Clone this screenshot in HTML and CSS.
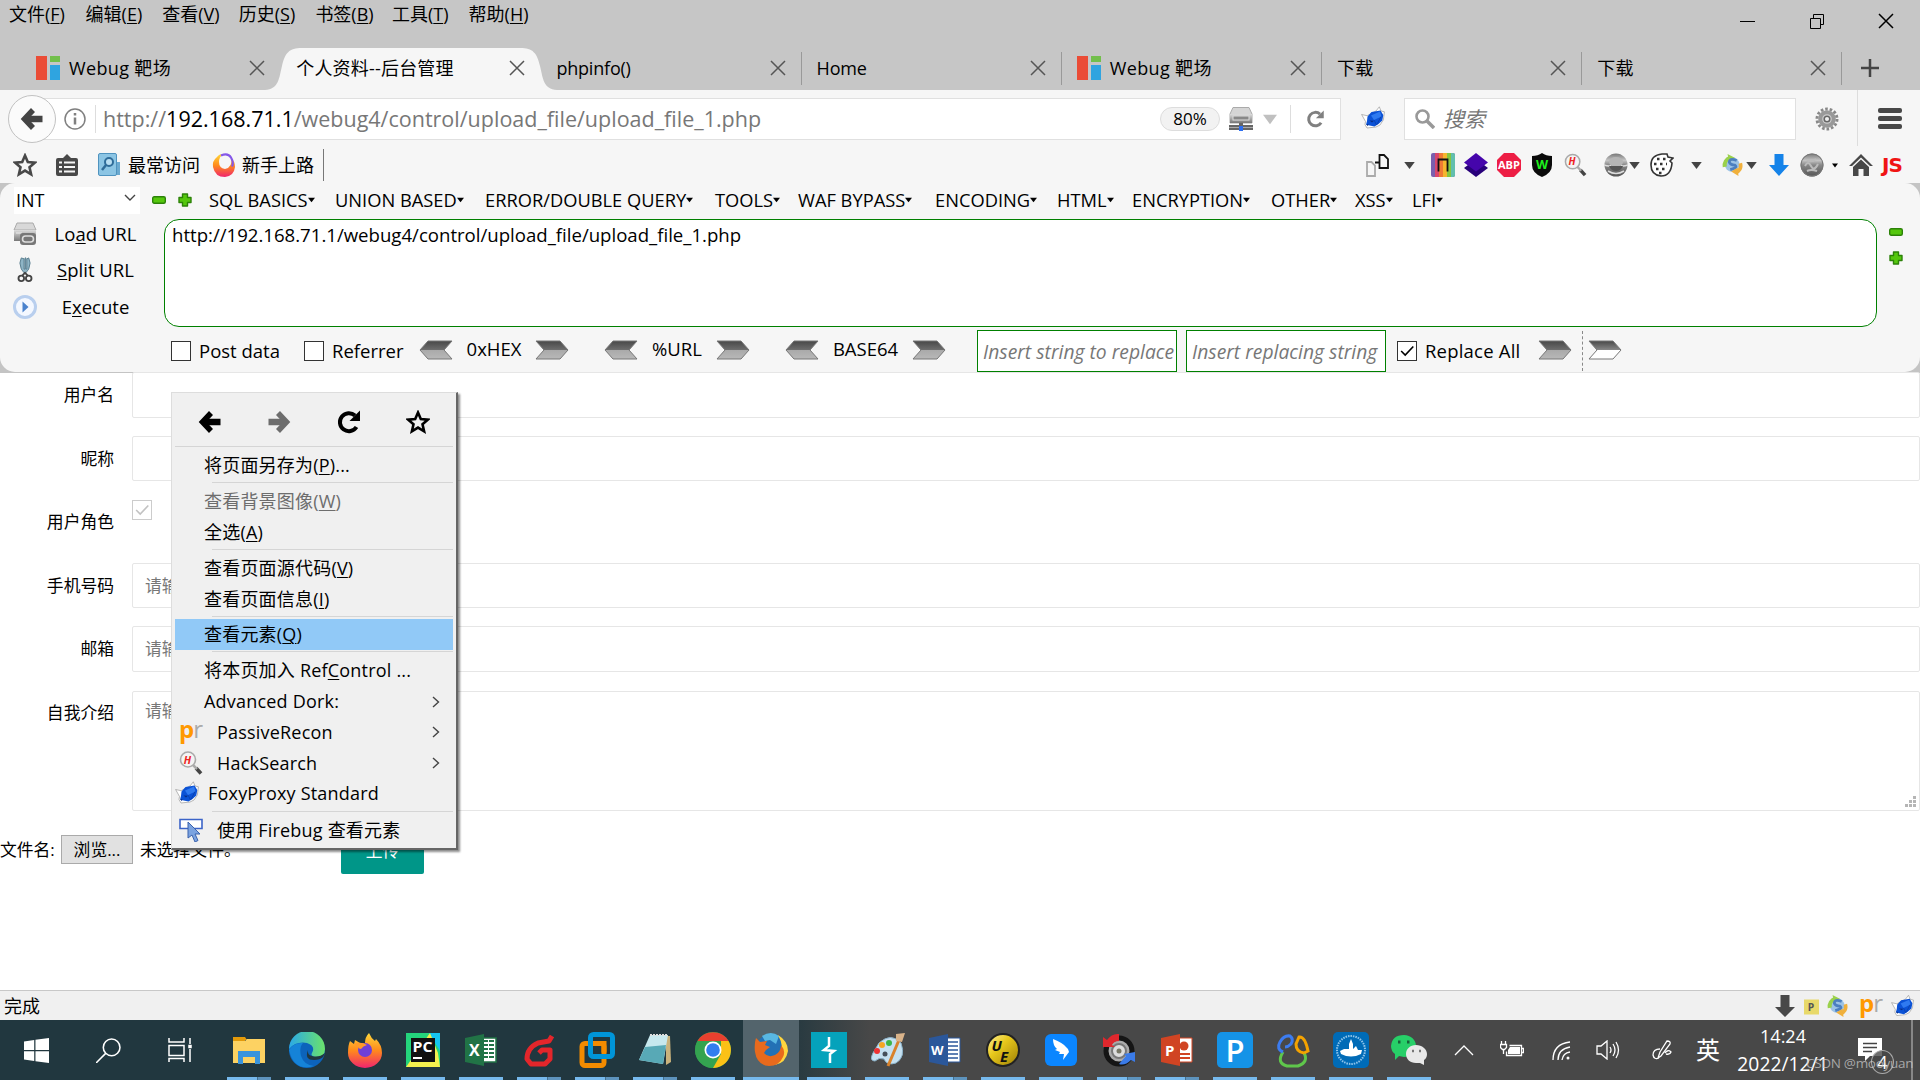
FILE: index.html
```html
<!DOCTYPE html>
<html lang="zh-CN">
<head>
  <meta charset="UTF-8">
  <title>个人资料--后台管理</title>
  <link rel="stylesheet" href="styles.css">
</head>
<body>

  <!-- shared icons -->
  <svg class="defs">
    <defs>
      <linearGradient id="steel" x1="0" y1="0" x2="0" y2="1"><stop offset="0" stop-color="#484848"/><stop offset=".5" stop-color="#6e6e6e"/><stop offset=".52" stop-color="#aaa"/><stop offset="1" stop-color="#b8b8b8"/></linearGradient>
      <linearGradient id="steel2" x1="0" y1="0" x2="0" y2="1"><stop offset="0" stop-color="#484848"/><stop offset=".5" stop-color="#888"/><stop offset=".52" stop-color="#fff"/><stop offset="1" stop-color="#fff"/></linearGradient>
      <linearGradient id="metal" x1="0" y1="0" x2="0" y2="1"><stop offset="0" stop-color="#ddd"/><stop offset="1" stop-color="#777"/></linearGradient>
      <linearGradient id="dark" x1="0" y1="0" x2="0" y2="1"><stop offset="0" stop-color="#777"/><stop offset=".3" stop-color="#c4c4c4"/><stop offset=".5" stop-color="#888"/><stop offset="1" stop-color="#555"/></linearGradient>
      <linearGradient id="fire" x1="0" y1="0" x2="0" y2="1"><stop offset="0" stop-color="#ffd83a"/><stop offset=".5" stop-color="#ff8a1c"/><stop offset="1" stop-color="#f0246e"/></linearGradient>
      <linearGradient id="edge" x1="0" y1="0" x2="1" y2="0"><stop offset="0" stop-color="#2aa8e8"/><stop offset="1" stop-color="#6be36a"/></linearGradient>
      <linearGradient id="gold" x1="0" y1="0" x2="1" y2="1"><stop offset="0" stop-color="#fff2a0"/><stop offset=".4" stop-color="#e8c81c"/><stop offset="1" stop-color="#9a7d05"/></linearGradient>
    </defs>
    <symbol id="x" viewBox="0 0 16 16"><path d="M1 1L15 15M15 1L1 15" fill="none" stroke="currentColor" stroke-width="1.5"/></symbol>
    <symbol id="webug" viewBox="0 0 24 24"><path fill="#ea4c36" d="M0 0h11v24H0z"/><path fill="#72bf4b" d="M14 0h10v6H14z"/><path fill="#2fa4e0" d="M14 9h10v15H14z"/></symbol>
    <symbol id="back" viewBox="0 0 24 24"><path fill="none" stroke="currentColor" stroke-width="5.500" d="M13 3L4.500 12L13 21"/><path stroke="currentColor" stroke-width="6.500" d="M5 12H22.500"/></symbol>
    <symbol id="reload" viewBox="0 0 24 24"><path fill="none" stroke="currentColor" stroke-width="4" d="M19.500 17A9 9 0 1 1 18 5.500"/><path fill="currentColor" d="M23 .500V11H12.500z"/></symbol>
    <symbol id="star" viewBox="0 0 24 24"><path fill="none" stroke="currentColor" stroke-width="2.600" d="M12 2.600l2.800 6.500 7 .600-5.300 4.600 1.600 7-6.100-3.700-6.100 3.700 1.600-7L2.200 9.700l7-.600z"/></symbol>
    <symbol id="down" viewBox="0 0 12 8"><path fill="currentColor" d="M0 0h12L6 8z"/></symbol>
    <symbol id="fox" viewBox="0 0 24 24"><path fill="#fff" stroke="#999" stroke-width=".7" d="M.6 8.500l5.500 1.200L15 5l3.300-4.200L20 5l3.400.800-1 8-3.400 5.200-4 2-9 1-2-3.500.500-3z"/><path fill="#0b52d6" d="M6.500 10.500l4-4.500 9-1.500 2.800 4.500-1 5.500-3.800 3.500-4 2.500-8.500-1.800L6 15z"/><path fill="#2f7af0" d="M10 9.500l9-4 1.500 5-7.500 3.500z"/><path fill="#0a2f86" d="M8.500 14.500l4.500.3-2 1.700zM5.500 18l2 .3-1 2z"/><path fill="none" stroke="#0a3da6" stroke-width=".8" d="M13 14l2.500 5M20 10.500l-4 8"/></symbol>
    <symbol id="hmag" viewBox="0 0 24 24"><path stroke="#444" stroke-width="3.600" d="M17 17l5 5.500"/><path stroke="#aaa" stroke-width="2.500" d="M13 13l5 5"/><circle cx="9" cy="8.500" r="7.500" fill="#f4f4f4" stroke="#aaa" stroke-width="1.600"/><text class="glyph" x="4.800" y="12.500" font-size="10.500" font-style="italic" fill="#e22">H</text></symbol>
    <symbol id="swirl" viewBox="0 0 24 24"><circle cx="11" cy="11.500" r="8" fill="#9cc3e6"/><path fill="none" stroke="#9ad14b" stroke-width="4.500" d="M3 14A9 9 0 0 1 9 4"/><path fill="#9ad14b" d="M6 0l8 4-6 5z"/><path fill="none" stroke="#4c7fc0" stroke-width="3" d="M16 7q-8-3-8 2 1 3 6 3 4 3-5 5"/><path fill="none" stroke="#f0b03c" stroke-width="4" d="M20 10A9 9 0 0 1 16 20"/><path fill="#f0b03c" d="M10 19l7-4 1 9z"/></symbol>
    <symbol id="minus" viewBox="0 0 14 8"><rect x=".7" y=".7" width="12.600" height="6.600" rx="1.500" fill="#55c70d" stroke="#2c8208" stroke-width="1.400"/></symbol>
    <symbol id="plus" viewBox="0 0 14 14"><path fill="#55c70d" stroke="#2c8208" stroke-width="1.400" stroke-linejoin="round" d="M4.500 1h5v3.500H13v5H9.500V13h-5V9.500H1v-5h3.500z"/></symbol>
    <symbol id="arrR" viewBox="0 0 34 20"><path fill="url(#steel)" stroke="#777" d="M1 1h24l8 9-8 9H1l8-9z"/></symbol>
    <symbol id="arrL" viewBox="0 0 34 20"><path fill="url(#steel)" stroke="#777" d="M33 1H9l-8 9 8 9h24l-8-9z"/></symbol>
    <symbol id="check" viewBox="0 0 20 20"><path fill="none" stroke="currentColor" stroke-width="1.800" d="M3.500 10l4.500 4.500L17 5"/></symbol>
    <symbol id="chev" viewBox="0 0 8 12"><path fill="none" stroke="#444" stroke-width="1.400" d="M1 1l5.500 5L1 11"/></symbol>
    <symbol id="printer" viewBox="0 0 24 24"><path fill="#d5d5d5" stroke="#aaa" d="M4 .5h16L23 7v9H1V7z"/><path fill="url(#metal)" d="M1 7h22v9H1z"/><rect x="4" y="9" width="16" height="4" fill="#888" stroke="#ddd"/><path fill="#666" d="M10 16h4v3H10zM0 18h24v5H0z"/><path stroke="#aaa" d="M0 20.500h24"/><path fill="#2d6ff0" d="M10 19h4v5h-4z"/></symbol>
  </svg>

  <div class="titlebar">
    <div class="menubar">
      <span>文件(<u>F</u>)</span><span>编辑(<u>E</u>)</span><span>查看(<u>V</u>)</span><span>历史(<u>S</u>)</span><span>书签(<u>B</u>)</span><span>工具(<u>T</u>)</span><span>帮助(<u>H</u>)</span>
    </div>
    <div class="winbtns">
      <svg width="16" height="16"><path d="M0 8.500h15" stroke="#000"/></svg>
      <svg width="16" height="16" fill="none" stroke="#000"><path d="M1.500 5.500h10v10h-10zM4.500 5V1.500h10v10H12"/></svg>
      <svg width="16" height="16"><use href="#x"/></svg>
    </div>
  </div>

  <div class="tabs">
    <div class="tab"><svg class="fav"><use href="#webug"/></svg><span>Webug 靶场</span><svg class="close"><use href="#x"/></svg></div>
    <div class="tab active">
      <svg class="tabshape" viewBox="0 0 292 42"><path fill="#f6f6f6" d="M0 42C14 41 14 30 17 18C20 5 24 0 37 0H255C268 0 272 5 275 18C278 30 278 41 292 42z"/></svg>
      <span>个人资料--后台管理</span><svg class="close"><use href="#x"/></svg>
    </div>
    <div class="tab line"><span class="latin">phpinfo()</span><svg class="close"><use href="#x"/></svg></div>
    <div class="tab line"><span class="latin">Home</span><svg class="close"><use href="#x"/></svg></div>
    <div class="tab line"><svg class="fav"><use href="#webug"/></svg><span>Webug 靶场</span><svg class="close"><use href="#x"/></svg></div>
    <div class="tab line"><span>下载</span><svg class="close"><use href="#x"/></svg></div>
    <div class="tab line"><span>下载</span><svg class="close"><use href="#x"/></svg></div>
    <svg class="newtab" viewBox="0 0 18 18"><path d="M9 0v18M0 9h18" stroke="#444" stroke-width="2.500"/></svg>
  </div>

  <div class="navbar">
    <div class="backbtn"><svg><use href="#back"/></svg></div>
    <div class="urlbar">
      <svg class="info" viewBox="0 0 22 22"><circle cx="11" cy="11" r="10" fill="none" stroke="#808080" stroke-width="1.500"/><path stroke="#808080" stroke-width="2.500" d="M11 9.500v7M11 5v2.500"/></svg>
      <div class="url">http://<b>192.168.71.1</b>/webug4/control/upload_file/upload_file_1.php</div>
      <span class="zoom">80%</span>
      <svg class="printer"><use href="#printer"/></svg>
      <svg class="drop"><use href="#down"/></svg>
      <div class="reload"><svg><use href="#reload"/></svg></div>
    </div>
    <svg class="foxbtn"><use href="#fox"/></svg>
    <div class="search">
      <svg viewBox="0 0 20 20"><circle cx="7.500" cy="7.500" r="6" fill="none" stroke="#999" stroke-width="2.600"/><path stroke="#999" stroke-width="3.500" d="M12 12l7 7"/></svg>
      <i>搜索</i>
    </div>
    <svg class="gear" viewBox="0 0 24 24"><circle cx="12" cy="12" r="10" fill="none" stroke="#888" stroke-width="3" stroke-dasharray="2.600 1.900"/><circle cx="12" cy="12" r="6.800" fill="#ccc" stroke="#999" stroke-width="4"/><circle cx="12" cy="12" r="2.800" fill="#eee" stroke="#666" stroke-width="1.500"/></svg>
    <div class="burger"><i></i><i></i><i></i></div>
  </div>

  <div class="bookmarks">
    <svg class="bm-star"><use href="#star"/></svg>
    <svg class="bm-list" viewBox="0 0 22 22"><path fill="#484848" d="M11 0l4 4h5q2 0 2 2v14q0 2-2 2H2q-2 0-2-2V6q0-2 2-2h5z"/><path stroke="#f6f6f6" stroke-width="2.200" d="M3 8.500h3M8 8.500h11M3 13h3M8 13h11M3 17.500h3M8 17.500h11"/></svg>
    <svg class="bm-book" viewBox="0 0 22 24"><path fill="#6ba9cf" d="M17 9h5v13h-5z"/><rect x=".5" y=".5" width="18" height="22" rx="1.500" fill="#8cc5e4" stroke="#4f93bf"/><circle cx="11" cy="9" r="4" fill="#b9def2" stroke="#2f6c99" stroke-width="2"/><path stroke="#2f6c99" stroke-width="2.500" d="M8 12l-4 5"/></svg>
    <span class="bm-t1">最常访问</span>
    <svg class="bm-ff" viewBox="0 0 24 24"><path fill="url(#fire)" d="M5 4Q0 8 1 14q2 10 12 10 9-1 10-10 0-6-4-9 2 9-6 11-6-1-6-7 0-5 4-8-4 0-6 3z"/><path fill="none" stroke="#8557e8" stroke-width="2.200" d="M9 2.500q7-3 10 2t1 9"/></svg>
    <span class="bm-t2">新手上路</span>
    <div class="addons">
      <svg class="a-pages" viewBox="0 0 24 24" fill="none" stroke-width="1.800"><path stroke="#aaa" d="M2 9h4.500L10 12.500V23H2z"/><path stroke="#111" d="M14.500 2h4.500l4 4v9h-8.500zM10 9.500h4.500"/></svg>
      <svg class="a-dd a1"><use href="#down"/></svg>
      <svg class="a-tool" viewBox="0 0 24 24"><rect width="24" height="24" rx="2" fill="#7b5fae"/><path fill="#d9466c" d="M4 0h4v24H4z"/><path fill="#ee7a35" d="M8 0h4v24H8z"/><path fill="#f5b52e" d="M12 0h4v24h-4z"/><path fill="#86c540" d="M16 0h4v24h-4z"/><path fill="#62bfae" d="M20 0h2q2 0 2 2v20q0 2-2 2h-2z"/><path fill="none" stroke="#111" stroke-width="1.800" d="M7.500 18.500V6.500h9v12"/></svg>
      <svg class="a-stack" viewBox="0 0 24 24"><path fill="#28007a" d="M0 15l4-3h16l4 3-12 9z"/><path fill="#4505ab" d="M0 9.500L12 0l12 9.500-12 9z"/></svg>
      <svg class="a-abp" viewBox="0 0 24 24"><path fill="#ed1e45" d="M7 0h10l7 7v10l-7 7H7l-7-7V7z"/><text class="glyph" x="1" y="16" font-size="10.500" textLength="22" lengthAdjust="spacingAndGlyphs" fill="#fff">ABP</text></svg>
      <svg class="a-w" viewBox="0 0 20 24"><path fill="#0b0b0b" d="M10 0q4 3 10 3v9q0 8-10 12Q0 20 0 12V3q6 0 10-3z"/><text class="glyph" x="10" y="15.500" text-anchor="middle" font-size="12.500" fill="#1df01d">W</text></svg>
      <svg class="a-hm"><use href="#hmag"/></svg>
      <svg class="a-globe" viewBox="0 0 24 24"><circle cx="12" cy="12" r="11.500" fill="url(#dark)"/><path fill="none" stroke="#ddd" stroke-width="1.500" d="M0 12q6 2 7 0M24 12q-6 2-7 0M4 18q8 5 16 0"/><ellipse cx="12" cy="9" rx="7" ry="5" fill="#b5b5b5"/><path fill="#555" d="M5 13h14q-2 5-7 5t-7-5z"/></svg>
      <svg class="a-dd a2"><use href="#down"/></svg>
      <svg class="a-cookie" viewBox="0 0 24 24"><path fill="#fff" stroke="#333" stroke-width="1.600" d="M22 10q-1 13-11 13Q1 22 1 12 1 2 12 1h5l1 3 5 1-3 3z"/><path stroke="#333" stroke-width="2.400" stroke-dasharray="2.500 3.500" d="M7 6h10M4 11h13M6 16h12M9 20h6"/></svg>
      <svg class="a-dd a3"><use href="#down"/></svg>
      <svg class="a-swirl"><use href="#swirl"/></svg>
      <svg class="a-dd a4"><use href="#down"/></svg>
      <svg class="a-down" viewBox="0 0 20 22"><path fill="#1583e9" d="M5.500 0h9v11H20l-10 11L0 11h5.500z"/></svg>
      <svg class="a-ball" viewBox="0 0 24 24"><circle cx="12" cy="12" r="11.500" fill="url(#dark)"/><circle cx="12" cy="12" r="11" fill="none" stroke="#777"/><path fill="none" stroke="#bbb" stroke-width="2" d="M5 13q3-6 6 0t7-2M7 7q4 3 9-1M7 18q4-2 10 0"/></svg>
      <svg class="a-dd small a5"><use href="#down"/></svg>
      <svg class="a-home" viewBox="0 0 24 22"><path fill="#484848" d="M12 0l12 12H20v10h-5.500v-7h-5v7H4V12H0z"/><path fill="none" stroke="#f6f6f6" stroke-width="1.500" d="M3 13l9-8.500 9 8.500"/></svg>
      <span class="a-js">JS</span>
    </div>
  </div>

  <div class="hackwrap">
    <div class="hackbar">
      <div class="hb-menu">
        <div class="hb-select"><span>INT</span><svg viewBox="0 0 12 8"><path fill="none" stroke="#444" stroke-width="1.400" d="M1 1l5 5 5-5"/></svg></div>
        <svg class="minus"><use href="#minus"/></svg>
        <svg class="plus"><use href="#plus"/></svg>
        <div class="hb-items">
          <span class="w1">SQL BASICS<svg><use href="#down"/></svg></span>
          <span class="w2">UNION BASED<svg><use href="#down"/></svg></span>
          <span class="w3">ERROR/DOUBLE QUERY<svg><use href="#down"/></svg></span>
          <span class="w4">TOOLS<svg><use href="#down"/></svg></span>
          <span class="w5">WAF BYPASS<svg><use href="#down"/></svg></span>
          <span class="w6">ENCODING<svg><use href="#down"/></svg></span>
          <span class="w7">HTML<svg><use href="#down"/></svg></span>
          <span class="w8">ENCRYPTION<svg><use href="#down"/></svg></span>
          <span class="w9">OTHER<svg><use href="#down"/></svg></span>
          <span class="w10">XSS<svg><use href="#down"/></svg></span>
          <span>LFI<svg><use href="#down"/></svg></span>
        </div>
      </div>
      <div class="hb-main">
        <div class="hb-side">
          <div><svg viewBox="0 0 24 24"><path fill="#d8d8d8" stroke="#aaa" d="M4 1h16l3 7H1z"/><path fill="url(#metal)" d="M1 8h22v11H1z"/><path stroke="#eee" d="M3 11h6"/><rect x="7" y="11" width="16" height="12" rx="3" fill="#777"/><path fill="none" stroke="#ddd" stroke-width="1.600" d="M9.500 17q0-3 3-3h5q3 0 3 3t-3 3h-5q-3 0-3-3z"/></svg><span>Lo<u>a</u>d URL</span></div>
          <div><svg viewBox="0 0 24 28"><path fill="#8fb5c6" stroke="#557b8c" d="M8 1q-3 5 0 12l3 4 2 0 3-4q3-7 0-12l-2 1v11h-1V1h-1v12h-1V2z"/><circle cx="8" cy="23" r="3" fill="none" stroke="#444" stroke-width="2"/><circle cx="16" cy="23" r="3" fill="none" stroke="#444" stroke-width="2"/><path stroke="#444" stroke-width="2" fill="none" d="M9 20l3-3 3 3"/></svg><span><u>S</u>plit URL</span></div>
          <div><svg viewBox="0 0 24 24"><circle cx="12" cy="12" r="10.500" fill="#f4f8ff" stroke="#b9cfee" stroke-width="3"/><path fill="#4a82cd" d="M9.500 6.500l6 5.500-6 5.500z"/></svg><span>E<u>x</u>ecute</span></div>
        </div>
        <div class="hb-text">http://192.168.71.1/webug4/control/upload_file/upload_file_1.php</div>
        <div class="hb-size"><svg class="minus"><use href="#minus"/></svg><svg class="plus"><use href="#plus"/></svg></div>
      </div>
      <div class="hb-tools">
        <i class="box"></i><span class="t-post">Post data</span>
        <i class="box"></i><span class="t-ref">Referrer</span>
        <svg class="arr"><use href="#arrL"/></svg><span class="t-hex">0xHEX</span><svg class="arr gap"><use href="#arrR"/></svg>
        <svg class="arr"><use href="#arrL"/></svg><span class="t-url">%URL</span><svg class="arr gap"><use href="#arrR"/></svg>
        <svg class="arr"><use href="#arrL"/></svg><span class="t-b64">BASE64</span><svg class="arr"><use href="#arrR"/></svg>
        <div class="rep first">Insert string to replace</div>
        <div class="rep">Insert replacing string</div>
        <i class="box"><svg><use href="#check"/></svg></i><span class="t-all">Replace All</span>
        <svg class="arr"><use href="#arrR"/></svg>
        <i class="dash"></i>
        <svg class="arr" viewBox="0 0 34 20"><path fill="url(#steel2)" stroke="#777" d="M1 1h24l8 9-8 9H1l8-9z"/></svg>
      </div>
    </div>
  </div>

  <div class="page">
    <div class="row"><label>用户名</label><div class="field"></div></div>
    <div class="row"><label>昵称</label><div class="field"></div></div>
    <div class="row"><label>用户角色</label><i class="rolebox"><svg><use href="#check"/></svg></i></div>
    <div class="row"><label>手机号码</label><div class="field">请输入</div></div>
    <div class="row"><label>邮箱</label><div class="field">请输入</div></div>
    <div class="row"><label>自我介绍</label><div class="field area">请输入<svg viewBox="0 0 12 12"><path fill="#b5b5b5" d="M8 0h3v3H8zM4 4h3v3H4zM8 4h3v3H8zM0 8h3v3H0zM4 8h3v3H4zM8 8h3v3H8z"/></svg></div></div>
    <div class="filerow"><span>文件名:</span><span class="browse">浏览...</span><span class="nofile">未选择文件。</span><span class="upload">上传</span></div>

    <div class="ctx">
      <div class="ctx-nav">
        <svg><use href="#back"/></svg>
        <svg class="fwd"><use href="#back"/></svg>
        <svg><use href="#reload"/></svg>
        <svg><use href="#star"/></svg>
      </div>
      <div class="item">将页面另存为(<u>P</u>)...</div>
      <hr>
      <div class="item off">查看背景图像(<u>W</u>)</div>
      <div class="item">全选(<u>A</u>)</div>
      <hr>
      <div class="item">查看页面源代码(<u>V</u>)</div>
      <div class="item">查看页面信息(<u>I</u>)</div>
      <hr>
      <div class="item hot">查看元素(<u>Q</u>)</div>
      <hr>
      <div class="item">将本页加入 Ref<u>C</u>ontrol ...</div>
      <div class="item">Advanced Dork:<svg class="chev"><use href="#chev"/></svg></div>
      <div class="item icon"><span class="pr"><b>p</b>r</span>PassiveRecon<svg class="chev"><use href="#chev"/></svg></div>
      <div class="item icon"><svg class="ic"><use href="#hmag"/></svg>HackSearch<svg class="chev"><use href="#chev"/></svg></div>
      <div class="item foxy"><svg class="ic"><use href="#fox"/></svg>FoxyProxy Standard</div>
      <hr>
      <div class="item icon"><svg class="ic" viewBox="0 0 24 24"><path fill="#fff" stroke="#3c64c8" stroke-width="1.600" d="M1 1.500h22v9H1z"/><path fill="#7ba3e0" stroke="#3b62ad" d="M9 4v16l4-3 3 7 3-1.500-3-6.500h5z"/></svg>使用 Firebug 查看元素</div>
    </div>
  </div>

  <div class="status">
    <span>完成</span>
    <svg class="s-down" viewBox="0 0 20 22"><path fill="#484848" d="M5.500 0h9v12H20l-10 10L0 12h5.500z"/></svg>
    <svg class="s-p" viewBox="0 0 16 16"><path fill="#e8d96a" d="M0 0h16v16H0z"/><text class="glyph" x="4" y="12" font-size="11" fill="#555">P</text></svg>
    <svg class="s-sw"><use href="#swirl"/></svg>
    <span class="pr"><b>p</b>r</span>
    <svg class="s-fox"><use href="#fox"/></svg>
  </div>

  <div class="taskbar">
    <div class="sys"><svg width="25" height="25" viewBox="0 0 24 24"><path fill="#fff" d="M0 3.300l9.800-1.400v9.500H0zM11 1.700L24 0v11.400H11zM0 12.600h9.800v9.500L0 20.700zM11 12.600h13V24l-13-1.700z"/></svg></div>
    <div class="sys"><svg width="25" height="25" viewBox="0 0 24 24" fill="none" stroke="#fff" stroke-width="1.500"><circle cx="15" cy="9" r="8"/><path d="M9.500 14.500L0 24"/></svg></div>
    <div class="sys"><svg width="24" height="24" viewBox="0 0 24 24" fill="none" stroke="#fff" stroke-width="1.500"><path d="M1 0v4h15V0M1 7.500h15v10H1zM1 24v-3.500h15V24M22 0v6M22 11v13"/><path fill="#fff" d="M21 7.500h2v2h-2z"/></svg></div>
    <div class="app multi"><svg viewBox="0 0 36 36"><path fill="#e39a0a" d="M2 5h12l2 3h-2v3H2z"/><path fill="#fdd262" d="M2 9h12l2-2h18v24H2z"/><path fill="#3a94dc" d="M7 19h22v13h-5v-7H12v7H7z"/></svg></div>
    <div class="app"><svg viewBox="0 0 36 36"><circle cx="18" cy="18" r="18" fill="#0c63bb"/><path fill="url(#edge)" d="M0 17A18 18 0 0 1 36 17Q36 25 27 25 21 24 23 21 27 14 18 11 7 9 0 17z"/><path fill="#1583d8" d="M0 18q5-8 14-7-4 4-2 13 3 9 13 10Q5 40 0 18z"/><path fill="#21373f" d="M19 18q-4 10 6 10 6 0 9-3l2-4q-6 5-13 3-5-1-4-6z"/></svg></div>
    <div class="app"><svg viewBox="0 0 36 36"><path fill="url(#fire)" d="M3 9l4 3 1-4 5 3 5 0q0-6 4-10 2 5 6 8l1-2q6 6 6 14a16.500 14.500 0 0 1-34 0Q1 13 3 9z"/><circle cx="18" cy="18" r="7" fill="#6f3fd6"/><path fill="#ff9a28" d="M7 12q7-3 13 1-4 1-6 4-2 0-3-2z"/></svg></div>
    <div class="app"><svg viewBox="0 0 36 36"><path fill="#24d57c" d="M1 1h34v34H1z"/><path fill="#15c5f2" d="M24 1h11v18z"/><path fill="#f4f04e" d="M1 35l24-34 8 20 2 14z"/><path fill="#111" d="M6 6h24v24H6z"/><text class="glyph" x="7.500" y="19.500" font-size="13.500" textLength="20" lengthAdjust="spacingAndGlyphs" fill="#fff">PC</text><path fill="#fff" d="M8 25h9v2H8z"/></svg></div>
    <div class="app"><svg viewBox="0 0 36 36"><path fill="#fff" stroke="#217346" stroke-width="1.500" d="M18 6h15v24H18z"/><path stroke="#217346" stroke-width="2" stroke-dasharray="5 1" d="M20 9h12M20 13h12M20 17h12M20 21h12M20 25h12"/><path fill="#217346" d="M2 6l19-4v32L2 30z"/><text class="glyph" x="6" y="24" font-size="16" fill="#fff">X</text></svg></div>
    <div class="app multi"><svg viewBox="0 0 36 36"><path fill="none" stroke="#e3262b" stroke-width="5" stroke-linejoin="round" d="M31 4l-3 5-11 2Q6 16 6 27l4 5h14l5-5V18h-8l-3 3"/></svg></div>
    <div class="app multi"><svg viewBox="0 0 36 36" fill="none" stroke-width="5"><rect x="3" y="11.500" width="22" height="22" rx="3" stroke="#f38b00"/><rect x="11.500" y="2.500" width="22" height="22" rx="3" stroke="#0095d9"/><path stroke="#f38b00" d="M17 11.500h8v9"/></svg></div>
    <div class="app multi"><svg viewBox="0 0 36 36"><path fill="#c9b27c" d="M29 4h4l1 26-5 3z"/><path fill="#c7e8ee" d="M13 3h18l-5 29-24-4z"/><path fill="#58a9b6" d="M8 15l21-2-3 19-24-4z"/><path stroke="#ddd" stroke-width="2" stroke-dasharray="2 1" d="M13 3h18"/></svg></div>
    <div class="app"><svg viewBox="0 0 36 36"><circle cx="18" cy="18" r="18" fill="#34a350"/><path fill="#e8402f" d="M2.500 9a18 18 0 0 1 31 0H18z"/><path fill="#fbc116" d="M33.500 9A18 18 0 0 1 18 36l8-14V9z"/><path fill="#34a350" d="M2.500 9L11 23l7 4-1 9A18 18 0 0 1 2.500 9z"/><circle cx="18" cy="18" r="8.500" fill="#fff"/><circle cx="18" cy="18" r="6.800" fill="#317eee"/></svg></div>
    <div class="app current"><svg viewBox="0 0 36 36"><circle cx="18" cy="17" r="15" fill="#2371b5"/><path fill="#58b7e2" d="M9 4q9-6 17 0l-3 8-6-4-5 1z"/><path fill="#ffd53e" d="M25 3q10 6 10 16-2 12-13 14 9-9 7-18-1-7-4-12z"/><path fill="#e86a1d" d="M3 6l4 4 7-1-2 4 5 2-4 3-2 3q4 5 11 2 6-3 6-10 5 6 2 12-4 9-14 9Q4 33 2 20q-1-8 1-14z"/></svg></div>
    <div class="app"><svg viewBox="0 0 36 36"><path fill="#05a2bb" d="M0 0h36v36H0z"/><path fill="none" stroke="#fff" stroke-width="2.500" d="M18 5v9l-5 4 10 1-4 3v9"/></svg></div>
    <div class="app"><svg viewBox="0 0 36 36"><path fill="#c6e1f1" stroke="#8db4cb" d="M10 11Q22 0 32 11q5 14-5 20-9 3-12-4-5-2-9 2-6 0-2-8z"/><circle cx="8" cy="19" r="3" fill="#e33"/><circle cx="13" cy="13" r="3" fill="#f5a623"/><circle cx="20" cy="11" r="3" fill="#3db54a"/><circle cx="16" cy="22" r="2.500" fill="#46505a"/><path stroke="#d9822b" stroke-width="3" d="M30 8L19 34"/><path fill="#d9b38a" d="M27 2l9-1-3 9-6-1z"/></svg></div>
    <div class="app multi"><svg viewBox="0 0 36 36"><path fill="#fff" stroke="#2b579a" d="M18 6h15v24H18z"/><path stroke="#2b579a" stroke-width="1.600" d="M20 10h11M20 14h11M20 18h11M20 22h11M20 26h11"/><path fill="#2b579a" d="M2 6l19-4v32L2 30z"/><text class="glyph" x="4" y="23" font-size="13" fill="#fff">W</text></svg></div>
    <div class="app"><svg viewBox="0 0 36 36"><circle cx="18" cy="18" r="16" fill="url(#gold)" stroke="#222" stroke-width="2"/><text class="glyph" x="6.500" y="18.500" font-size="15" font-style="italic" fill="#111">U</text><text class="glyph" x="15" y="29.500" font-size="15" font-style="italic" fill="#111">E</text></svg></div>
    <div class="app"><svg viewBox="0 0 36 36"><rect x="2" y="2" width="32" height="32" rx="6" fill="#0b86ff"/><path fill="#fff" d="M10 7q10 4 13 8 3 2 3 5l-6 8 1-6-5 0 1-2-5-2 2-1q-4-3-4-10z"/></svg></div>
    <div class="app multi"><svg viewBox="0 0 36 36"><circle cx="18" cy="19" r="13" fill="#aaa" stroke="#151515" stroke-width="5"/><circle cx="18" cy="19" r="7" fill="#ddd" stroke="#777" stroke-width="2"/><circle cx="18" cy="19" r="2.500" fill="#776"/><path fill="#e0272d" d="M2 15V5l4 3q5-7 12-6v7q-5 0-7 4l3 2z"/><path fill="#3b7be8" d="M34 20v10l-4-2q-6 6-12 4l7-8-2-2z"/></svg></div>
    <div class="app multi"><svg viewBox="0 0 36 36"><path fill="#fff" stroke="#d04423" d="M18 6h15v24H18z"/><path stroke="#d04423" stroke-width="1.800" d="M21 22h10M21 26h10"/><circle cx="25" cy="14" r="4.500" fill="#d04423"/><path fill="#d04423" d="M2 6l19-4v32L2 30z"/><text class="glyph" x="6" y="24" font-size="15" fill="#fff">P</text></svg></div>
    <div class="app"><svg viewBox="0 0 36 36"><rect width="36" height="36" rx="5" fill="#1593e7"/><text x="8.500" y="29.500" font-size="31" font-weight="600" fill="#fff">P</text></svg></div>
    <div class="app"><svg viewBox="0 0 36 36" fill="none" stroke-width="3"><path stroke="#5fc64b" d="M8 20Q1 31 12 34h11q11-4 6-13"/><path stroke="#3c7cf0" d="M8 20Q1 17 5 10 9 3 15 4q4 3 1 8-3 3-6 3"/><path stroke="#f5a300" d="M29 21q-8-1-8-9l3-7q6-1 9 14l-4 2"/></svg></div>
    <div class="app"><svg viewBox="0 0 36 36"><rect width="36" height="36" rx="5" fill="#006bb7"/><circle cx="18" cy="18" r="14" fill="none" stroke="#8ec4ea" stroke-width="2" stroke-dasharray="1.500 1"/><path fill="#fff" d="M7 19l4-2 5 0V12l2-5 2 5v5l3-3 2 4 4 0-1 4q-10 5-20 0z"/></svg></div>
    <div class="app"><svg viewBox="0 0 36 36"><path fill="#27cf68" d="M13 3c7 0 12 5 12 11s-5 11-12 11l-5-1-4 4v-6Q0 19 0 14 1 3 13 3z"/><path fill="#e8e8e8" d="M25 13c6 0 11 4 11 9q0 4-3 6v5l-4-2h-4c-6 0-10-4-10-9s4-9 10-9z"/><path stroke="#17603a" stroke-width="3" d="M7 10h2.500M16 10h2.500"/><path stroke="#777" stroke-width="2.500" d="M21 19h2M28 19h2"/></svg></div>
    <div class="tray">
      <svg class="t1" viewBox="0 0 20 12"><path d="M1 11l9-9 9 9"/></svg>
      <svg class="t2" viewBox="0 0 24 18"><path d="M9.500 4.500h12v10h-15v-4M22 7.500h1.500v4H22M1.500 0v3M5.500 0v3M.5 3.500h6v3l-2 2h-2l-2-2zM3.500 9v4"/><path class="solid" d="M10 6h10v7H8v-4z"/></svg>
      <svg class="t3" viewBox="0 0 20 20"><path d="M2 20Q2 4 19 2M7 20Q7 9 19 7M11 20Q12 13 19 12"/><circle class="solid" cx="17" cy="18" r="1.500"/></svg>
      <svg class="t4" viewBox="0 0 24 20"><path d="M1 6h4l6-5v18l-6-5H1zM14 7q2 3 0 6M17 4q4 6 0 12M20 2q5 8 0 16"/></svg>
      <svg class="t5" viewBox="0 0 20 20"><path d="M8 12L15 1q4 0 3 3L9 16l-3 2 2-6zM8 9q-7 0-7 6 1 5 6 3M13 13q3-4 6-1-1 3-5 2"/></svg>
      <span class="ime">英</span>
      <div class="clock"><span>14:24</span><span class="date">2022/12/1</span></div>
      <div class="notice"><svg viewBox="0 0 24 24"><path fill="#fff" d="M0 0h24v18H12l-5 5v-5H0z"/><path stroke="#444" stroke-width="1.500" d="M5 5.500h14M5 9.500h14M5 13.500h9"/></svg><span>4</span></div>
      <i class="peek"></i>
    </div>
    <div class="mark">CSDN @mooyuan</div>
  </div>

</body>
</html>
```
FILE: styles.css
```css
* {
  box-sizing: border-box;
}

body {
  margin: 0;
  width: 1920px;
  height: 1080px;
  overflow: hidden;
  display: flex;
  flex-direction: column;
  font-family: "Open Sans", "Noto Sans CJK SC", sans-serif;
  font-size: 18px;
  line-height: 24px;
  letter-spacing: 0;
  color: #000;
  background: #fff;
  white-space: nowrap;
}

svg {
  display: block;
  flex: none;
}

i {
  font-style: normal;
}

u {
  text-underline-offset: 2px;
  text-decoration-thickness: 1px;
}

.defs {
  position: absolute;
  width: 0;
  height: 0;
}

.glyph {
  font-weight: 700;
  letter-spacing: 0;
}

/* title + tabs */
.titlebar {
  height: 48px;
  flex: none;
  background: #c6c6c6;
  display: flex;
  justify-content: space-between;
}

.menubar {
  display: flex;
  padding: 2px 0 0 9px;
}

.menubar span {
  width: 76.6px;
}

.winbtns {
  display: flex;
  gap: 53px;
  padding: 13px 26px 0 0;
}

.tabs {
  height: 42px;
  flex: none;
  background: #c6c6c6;
  display: flex;
  padding-left: 21px;
}

.tab {
  width: 260.2px;
  height: 42px;
  padding: 0 16px 2px 15px;
  display: flex;
  align-items: center;
  position: relative;
}

.tab span {
  flex: 1;
  position: relative;
  letter-spacing: 0.35px;
}

.tab.active span {
  letter-spacing: 0.2px;
}

.tab span.latin {
  letter-spacing: -0.2px;
}

.tab.line::after {
  content: "";
  position: absolute;
  right: 0;
  top: 4px;
  width: 1px;
  height: 33px;
  background: #999;
}

.tabshape {
  position: absolute;
  left: -16px;
  top: 0;
  width: 292px;
  height: 42px;
}

.fav {
  width: 24px;
  height: 24px;
  margin-right: 9px;
}

.close {
  width: 16px;
  height: 16px;
  color: #555;
  position: relative;
}

.newtab {
  width: 18px;
  height: 18px;
  margin: 11px 0 0 19px;
}

/* navigation */
.navbar {
  height: 57px;
  flex: none;
  background: #f6f6f6;
  display: flex;
  padding-top: 8px;
}

.backbtn {
  width: 48px;
  height: 48px;
  margin: -3px -16px 0 8px;
  border: 1px solid #c2c2c2;
  border-radius: 50%;
  background: #fbfbfb;
  display: flex;
  align-items: center;
  justify-content: center;
  color: #444;
  z-index: 1;
}

.backbtn svg {
  width: 24px;
  height: 24px;
}

.urlbar {
  width: 1301px;
  height: 42px;
  border: 1px solid #e0e0e0;
  background: #fff;
  display: flex;
  align-items: center;
}

.info {
  width: 22px;
  height: 22px;
  margin: 0 9px 0 23px;
}

.url {
  width: 1065px;
  height: 28px;
  line-height: 28px;
  padding-left: 7px;
  border-left: 1px solid #ddd;
  font-size: 21.5px;
  color: #777;
}

.url b {
  font-weight: 400;
  color: #000;
}

.zoom {
  width: 60px;
  height: 24px;
  line-height: 22px;
  border: 1px solid #ddd;
  border-radius: 12px;
  background: #f2f2f2;
  text-align: center;
  font-size: 17px;
}

.printer {
  width: 24px;
  height: 24px;
  margin: 0 10px 0 9px;
}

.drop {
  width: 14px;
  height: 11px;
  color: #c0c0c0;
}

.reload {
  height: 28px;
  margin-left: 13px;
  padding: 5px 0 0 15px;
  border-left: 1px solid #ddd;
  color: #808080;
}

.reload svg {
  width: 19px;
  height: 18px;
}

.foxbtn {
  width: 24px;
  height: 24px;
  margin: 8px 19px 0 20px;
}

.search {
  width: 392px;
  height: 42px;
  border: 1px solid #e0e0e0;
  background: #fff;
  display: flex;
  align-items: center;
  padding-left: 10px;
}

.search svg {
  width: 20px;
  height: 20px;
}

.search i {
  margin-left: 8px;
  font-size: 21px;
  font-style: italic;
  color: #777;
}

.gear {
  width: 24px;
  height: 24px;
  margin: 9px 18px 0 19px;
}

.burger {
  margin-top: -8px;
  height: 56px;
  padding: 18px 0 0 20px;
  border-left: 1px solid #ddd;
}

.burger i {
  display: block;
  width: 24px;
  height: 5px;
  margin-bottom: 3px;
  border-radius: 2px;
  background: #484848;
}

/* bookmarks */
.bookmarks {
  height: 36px;
  flex: none;
  background: #f6f6f6;
  display: flex;
  align-items: center;
}

.bm-star { width: 24px; height: 24px; margin-left: 13px; color: #484848; }
.bm-list { width: 22px; height: 22px; margin-left: 19px; }
.bm-book { width: 22px; height: 24px; margin-left: 20px; }
.bm-t1 { margin-left: 8px; width: 77px; }
.bm-ff { width: 24px; height: 24px; margin-left: 7px; }
.bm-t2 { margin-left: 6px; width: 82px; height: 32px; line-height: 32px; border-right: 1px solid #777; }

.addons {
  flex: 1;
  display: flex;
  align-items: center;
  padding-left: 1041px;
}

.a-dd { width: 11px; height: 7px; color: #444; }
.a-dd.small { width: 6px; height: 5px; color: #000; }
.a-pages { width: 24px; height: 24px; }
.a1 { margin: 0 16px 0 15px; }
.a-tool { width: 24px; height: 24px; margin-right: 9px; }
.a-stack { width: 24px; height: 24px; margin-right: 9px; }
.a-abp { width: 24px; height: 24px; margin-right: 11px; }
.a-w { width: 20px; height: 24px; margin-right: 12px; }
.a-hm { width: 23px; height: 24px; margin-right: 17px; }
.a-globe { width: 24px; height: 24px; margin-right: 1px; }
.a2 { margin-right: 10px; }
.a-cookie { width: 24px; height: 24px; }
.a3 { margin: 0 20px 0 17px; }
.a-swirl { width: 22px; height: 24px; }
.a4 { margin: 0 12px 0 2px; }
.a-down { width: 20px; height: 22px; }
.a-ball { width: 24px; height: 24px; margin-left: 11px; }
.a5 { margin: 0 11px 0 8px; }
.a-home { width: 24px; height: 22px; margin-right: 9px; }

.a-js {
  font-size: 20px;
  font-weight: 700;
  font-family: "DejaVu Sans", sans-serif;
  letter-spacing: -1px;
  color: #f01414;
}

/* hackbar */
.hackwrap {
  height: 190px;
  flex: none;
  background: #c4c4c4;
  padding-bottom: 1px;
}

.hackbar {
  height: 189px;
  background: #f6f6f6;
  border-radius: 15px;
  overflow: hidden;
}

.hb-menu {
  height: 36px;
  display: flex;
  align-items: center;
  padding-left: 14px;
}

.hb-select {
  width: 126px;
  height: 27px;
  margin-top: -2px;
  padding: 0 4px 0 2px;
  background: #fff;
  display: flex;
  align-items: center;
  justify-content: space-between;
}

.hb-select svg {
  width: 12px;
  height: 8px;
  margin-bottom: 5px;
}

.minus {
  width: 14px;
  height: 8px;
}

.plus {
  width: 14px;
  height: 14px;
}

.hb-menu .minus { margin: -2px 12px 0 12px; }
.hb-menu .plus { margin-top: -2px; }

.hb-items {
  display: flex;
  margin: -2px 0 0 17px;
  font-size: 18.3px;
}

.hb-items span {
  display: flex;
  align-items: center;
}

.hb-items svg {
  width: 7px;
  height: 6px;
}

.w1 { width: 126px; }
.w2 { width: 150px; }
.w3 { width: 230px; }
.w4 { width: 83px; }
.w5 { width: 137px; }
.w6 { width: 122px; }
.w7 { width: 75px; }
.w8 { width: 139px; }
.w9 { width: 84px; }
.w10 { width: 57px; }

.hb-main {
  height: 109px;
  display: flex;
}

.hb-side {
  width: 164px;
  font-size: 18.5px;
}

.hb-side div {
  height: 36px;
  display: flex;
  align-items: center;
  padding: 0 10px 6px 13px;
}

.hb-side div:last-child {
  padding-bottom: 4px;
}

.hb-side svg {
  width: 24px;
  height: 26px;
}

.hb-side span {
  flex: 1;
  text-align: center;
}

.hb-text {
  width: 1713px;
  height: 108px;
  padding: 3px 7px;
  border: 1px solid #008000;
  border-radius: 15px;
  background: #fff;
  font-size: 18.6px;
}

.hb-size {
  padding: 9px 0 0 12px;
}

.hb-size .plus {
  margin-top: 15px;
}

.hb-tools {
  height: 44px;
  padding: 2px 0 0 171px;
  display: flex;
  align-items: center;
  font-size: 18.5px;
}

.box {
  width: 20px;
  height: 20px;
  margin-right: 8px;
  border: 1px solid #333;
  background: #fff;
}

.box svg {
  width: 18px;
  height: 18px;
}

.arr {
  width: 34px;
  height: 20px;
  margin-top: -2px;
}

.arr.gap { margin-right: 35px; }
.t-post { width: 105px; margin-top: -1px; }
.t-ref { width: 87px; margin-top: -1px; }
.t-hex { width: 82px; text-align: center; margin-top: -5px; }
.t-url { width: 78px; text-align: center; margin-top: -5px; }
.t-b64 { width: 93px; text-align: center; margin-top: -5px; }
.t-all { width: 113px; margin-top: -1px; letter-spacing: 0.2px; }

.rep {
  width: 200px;
  height: 42px;
  line-height: 41px;
  padding: 0 5px;
  margin-right: 11px;
  border: 1px solid #008000;
  background: #fff;
  font-size: 19.3px;
  font-style: italic;
  color: #777;
  overflow: hidden;
}

.rep.first {
  margin: 0 9px 0 31px;
}

.dash {
  height: 40px;
  margin: 0 5px 0 10px;
  border-left: 1px dashed #888;
}

/* page */
.page {
  position: relative;
  height: 617px;
  font-size: 16.8px;
}

.row {
  display: flex;
  height: 63.6px;
}

.row label {
  width: 114px;
  margin-right: 18px;
  padding-top: 10px;
  text-align: right;
}

.field {
  flex: 1;
  height: 45.5px;
  margin-top: -1px;
  padding: 10px 12px;
  border: 1px solid #e6e6e6;
  border-radius: 2px;
  color: #777;
}

.field.area {
  height: 120px;
  margin-top: 0;
  padding-top: 7px;
  position: relative;
}

.area svg {
  position: absolute;
  right: 2px;
  bottom: 2px;
  width: 12px;
  height: 12px;
}

.rolebox {
  width: 20px;
  height: 20px;
  border: 1px solid #ccc;
  color: #c2c2c2;
}

.rolebox svg {
  width: 18px;
  height: 18px;
}

.filerow {
  display: flex;
  align-items: center;
  height: 46px;
  margin-top: 73px;
}

.browse {
  width: 72px;
  height: 29px;
  line-height: 27px;
  margin: 0 7px;
  border: 1px solid #aaa;
  background: #e1e1e1;
  text-align: center;
}

.filerow span:not(.upload) {
  position: relative;
  top: -1px;
}

.filerow span:first-child {
  width: 54px;
}

.nofile {
  width: 201px;
}

.upload {
  width: 83px;
  height: 46px;
  line-height: 46px;
  border-radius: 2px;
  background: #009688;
  color: #fff;
  text-align: center;
}

/* context menu */
.ctx {
  position: absolute;
  left: 171px;
  top: 19px;
  width: 287px;
  height: 458px;
  padding: 3px;
  background: #f0f0f0;
  border: 1px solid #ddd;
  border-right: 2px solid #666;
  border-bottom: 2px solid #666;
  box-shadow: 2px 2px 2px rgba(0, 0, 0, .45);
  font-size: 18px;
}

.ctx-nav {
  height: 51px;
  display: flex;
  justify-content: space-between;
  align-items: center;
  padding: 1px 23px 0;
  border-bottom: 1px solid #d5d5d5;
  margin-bottom: 3px;
}

.ctx-nav svg {
  width: 24px;
  height: 24px;
}

.ctx-nav .fwd {
  transform: scaleX(-1);
  color: #6d6d6d;
}

.item {
  height: 31px;
  line-height: 30px;
  padding-left: 29px;
  display: flex;
  letter-spacing: 0.2px;
  white-space: pre;
}

.item.icon,
.item.foxy {
  padding: 0 0 2px 4px;
  align-items: center;
}

.item.foxy { padding: 0 0 3px 0; }
.item.off { color: #6d6d6d; }
.item.hot { background: #91c9f7; margin: -1px 0 1px; }

.ic {
  width: 24px;
  height: 24px;
  margin-right: 14px;
}

.foxy .ic {
  margin-right: 9px;
}

.ctx hr {
  height: 1px;
  margin: 1px 0 3px 37px;
  border: 0;
  background: #d5d5d5;
}

.chev {
  width: 8px;
  height: 12px;
  margin: auto 13px auto auto;
}

.pr {
  font-size: 24px;
  line-height: 20px;
  letter-spacing: -1px;
  color: #aaa;
}

.pr b {
  color: #f90;
}

.item .pr {
  width: 38px;
  padding-bottom: 6px;
}

/* status bar */
.status {
  height: 30px;
  flex: none;
  background: #f0f0f0;
  border-top: 1px solid #c8c8c8;
  display: flex;
  align-items: center;
  padding-left: 4px;
}

.status > span:first-child {
  flex: 1;
}

.s-down { width: 20px; height: 22px; }
.s-p { width: 15px; height: 16px; margin: 2px 8px 0 9px; }
.s-sw { width: 22px; height: 22px; }
.status .pr { width: 32px; margin-left: 10px; padding-bottom: 5px; }
.s-fox { width: 23px; height: 24px; margin-right: 6px; }

/* taskbar */
.taskbar {
  position: relative;
  height: 60px;
  flex: none;
  display: flex;
  align-items: stretch;
  background: linear-gradient(90deg, #21373f 780px, #484848 870px);
}

.sys {
  width: 72px;
  display: flex;
  align-items: center;
  justify-content: center;
}

.app {
  width: 58px;
  position: relative;
  left: 4px;
  display: flex;
  align-items: center;
  justify-content: center;
}

.app svg {
  width: 36px;
  height: 36px;
}

.app::after {
  content: "";
  position: absolute;
  left: 7px;
  right: 7px;
  bottom: 0;
  height: 3px;
  background: #76b9ed;
}

.app.multi::after {
  background: linear-gradient(90deg, #76b9ed 30px, #44708e 30px, #44708e 31px, #5d93bd 31px);
}

.app.current {
  background: #53646c;
  background-clip: content-box;
  padding: 0 1px;
}

.app.current::after {
  left: 1px;
  right: 1px;
}

.tray {
  flex: 1;
  display: flex;
  align-items: center;
  color: #fff;
}

.tray svg {
  fill: none;
  stroke: #fff;
  stroke-width: 1.3;
}

.tray .solid {
  fill: #fff;
  stroke: none;
}

.t1 { width: 20px; height: 12px; margin-left: 20px; }
.t2 { width: 24px; height: 18px; margin-left: 26px; }
.t3 { width: 20px; height: 20px; margin-left: 27px; }
.t4 { width: 24px; height: 20px; margin-left: 25px; }
.t5 { width: 20px; height: 20px; margin-left: 32px; }

.ime {
  width: 25px;
  margin-left: 24px;
  font-size: 24px;
  line-height: 56px;
}

.clock {
  width: 98px;
  margin-left: 13px;
  text-align: center;
  line-height: 28px;
}

.clock span {
  display: block;
}

.clock .date {
  font-size: 19.3px;
}

.notice {
  position: relative;
  margin-left: 26px;
}

.notice svg {
  width: 24px;
  height: 24px;
  stroke: none;
}

.notice span {
  position: absolute;
  left: 13px;
  top: 12px;
  width: 23px;
  height: 24px;
  line-height: 22px;
  border: 1px solid #aaa;
  border-radius: 50%;
  background: rgba(72, 72, 72, .8);
  text-align: center;
}

.peek {
  width: 2px;
  height: 60px;
  margin-left: 29px;
  background: #888;
}

.mark {
  position: absolute;
  left: 1806px;
  top: 31px;
  font-size: 13.5px;
  letter-spacing: -0.3px;
  color: rgba(200, 200, 200, .75);
}
```
